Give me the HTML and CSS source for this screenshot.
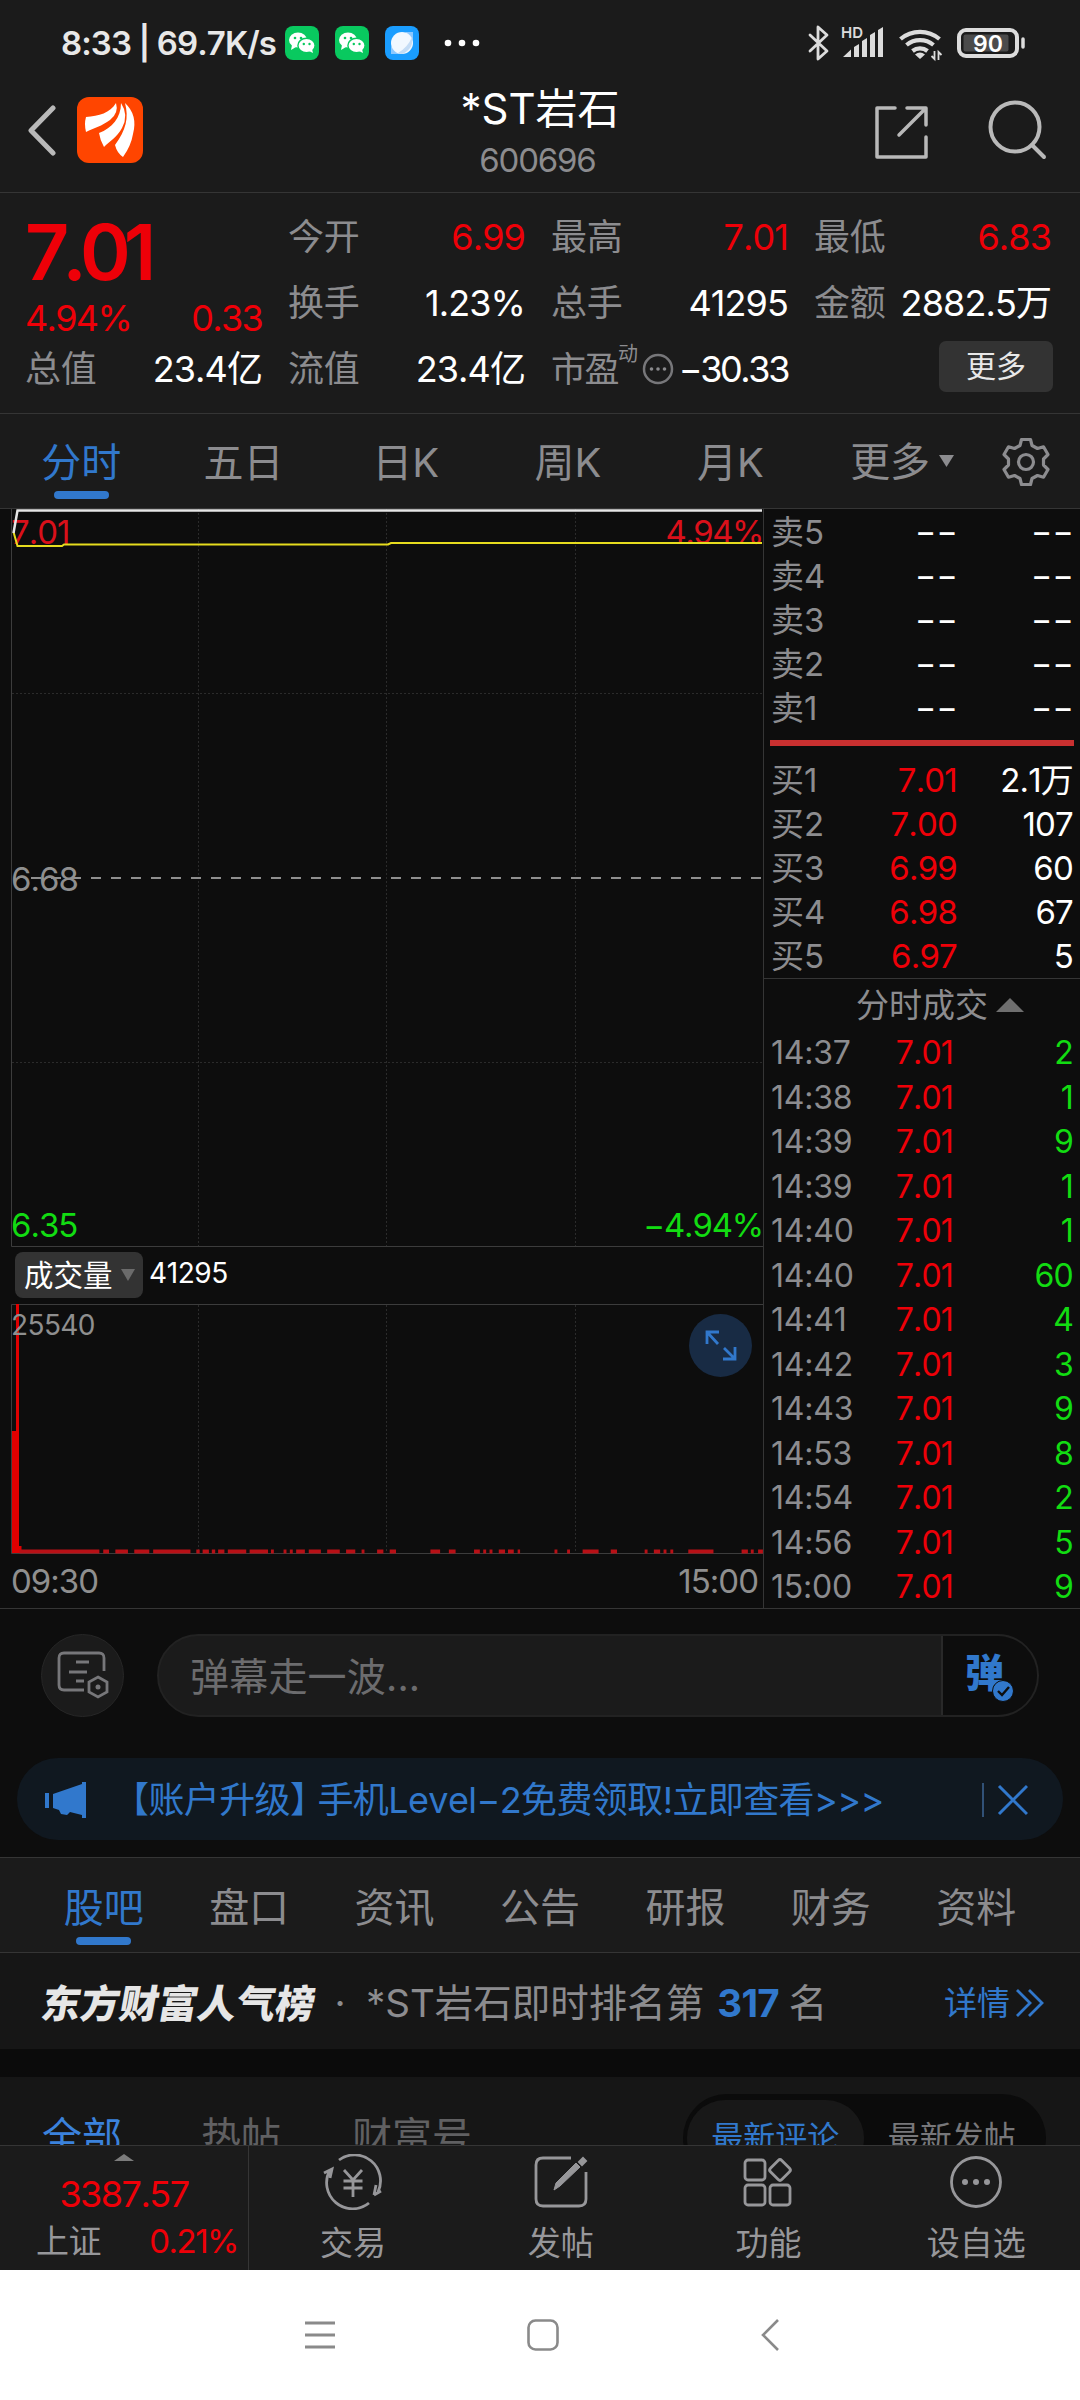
FILE: index.html
```html
<!DOCTYPE html>
<html lang="zh-CN">
<head>
<meta charset="utf-8">
<title>*ST岩石 600696</title>
<link rel="stylesheet" href="styles.css">
</head>
<body>
<header class="top">
  <div class="status">
    <span class="status-text">8:33 | 69.7K/s</span>
    <svg class="app-icons" width="196" height="34" viewBox="0 0 196 34">
      <defs>
        <g id="chat">
          <rect width="34" height="34" rx="8" fill="#09c95f"/>
          <ellipse cx="13" cy="14" rx="9" ry="7.6" fill="#fff"/><path d="M7 19l-1 5 5-3z" fill="#fff"/>
          <ellipse cx="21.5" cy="19.5" rx="8.6" ry="7.2" fill="#fff" stroke="#09c95f" stroke-width="1.4"/><path d="M24 25l4 2-1-4z" fill="#fff"/>
          <g fill="#09c95f"><circle cx="10" cy="12" r="1.3"/><circle cx="16" cy="12" r="1.3"/><circle cx="18.8" cy="18" r="1.2"/><circle cx="24.5" cy="18" r="1.2"/></g>
        </g>
      </defs>
      <use href="#chat"/><use href="#chat" x="50"/>
      <rect x="100" width="34" height="34" rx="8" fill="#1a9dff"/><path d="M120 6h8v8zM106 20v8h9z" fill="#8cc8ff"/><circle cx="117" cy="17" r="11" fill="#f1f8ff"/><path d="M127 11q2 12-10 17l-4-1q10-6 14-16z" fill="#c4dcf5"/>
      <g fill="#fff"><circle cx="163" cy="17" r="3.3"/><circle cx="177" cy="17" r="3.3"/><circle cx="191" cy="17" r="3.3"/></g>
    </svg>
    <svg class="sys-icons" width="220" height="36" viewBox="808 24 220 36" fill="none" stroke="#dcdcdc">
      <path d="M810 34l17 16-9 8V26l9 8-17 16" stroke-width="2.8" stroke-linejoin="round" stroke-linecap="round"/>
      <g fill="#dcdcdc" stroke="none"><path d="M843 56l8-7.500v7.500zM854 46l5-3v13h-5zM862 40l5-3v19h-5zM870 34l5-3v25h-5zM878 29l5-3v30h-5z"/><text class="hd" x="841" y="37">HD</text></g>
      <g stroke-width="4.200"><path d="M900.500 38a30 30 0 0 1 39 0M906.500 44a21 21 0 0 1 27 0M912.500 50a12 12 0 0 1 15 0"/></g>
      <path d="M915 53.500q5-4 10 0l-5 4.500z" fill="#dcdcdc" stroke="none"/>
      <path d="M934.500 50v8l-3-3M938.500 59v-8l3 3" stroke-width="1.800"/>
      <rect x="959" y="29" width="58" height="26" rx="7" stroke-width="4"/>
      <rect x="963.500" y="33.500" width="45" height="17" rx="2" fill="#4b4b4b" stroke="none"/>
      <path d="M1023 38v8" stroke-width="3.500" stroke-linecap="round"/>
      <text class="battery" x="988" y="50.500" text-anchor="middle" fill="#fff" stroke="none">90</text>
    </svg>
  </div>
  <div class="titlebar">
    <svg class="back" width="30" height="52" viewBox="0 0 30 52"><path d="M26 4L4 26.500 26 49" fill="none" stroke="#b9b9b9" stroke-width="5" stroke-linecap="round" stroke-linejoin="round"/></svg>
    <svg class="logo" width="66" height="66" viewBox="0 0 66 66"><rect width="66" height="66" rx="12" fill="#ff4500"/><g fill="#fff"><path d="M9 20C22 19 33 16 39 6Q42 16 33 23C25 29 17 31 9 35Q7 27 9 20z"/><path d="M22 36C35 31 44 21 44 6Q52 18 45 31C40 40 33 44 27 50Q23 43 22 36z"/><path d="M38 48C49 33 52 21 48 6Q61 18 56 37Q54 49 46 60Q40 56 38 48z"/></g></svg>
    <div class="title"><h1>*ST岩石</h1><p>600696</p></div>
    <svg class="share" width="56" height="56" viewBox="0 0 56 56" fill="none" stroke="#b9b9b9" stroke-width="3.500" stroke-linecap="round" stroke-linejoin="round"><path d="M21 4H3v49h49V33M33 4h19v17M51 5L25 31"/></svg>
    <svg class="search" width="60" height="60" viewBox="0 0 60 60" fill="none" stroke="#b9b9b9" stroke-width="4" stroke-linecap="round"><circle cx="27" cy="27" r="24.500"/><path d="M44 45l12 12"/></svg>
  </div>
</header>

<section class="quote">
  <div class="qcol first">
    <strong class="last up">7.01</strong>
    <div class="chg up"><span>4.94%</span><span>0.33</span></div>
    <div class="q"><label>总值</label><b>23.4亿</b></div>
  </div>
  <div class="qcol">
    <div class="q"><label>今开</label><b class="up">6.99</b></div>
    <div class="q"><label>换手</label><b>1.23%</b></div>
    <div class="q"><label>流值</label><b>23.4亿</b></div>
  </div>
  <div class="qcol">
    <div class="q"><label>最高</label><b class="up">7.01</b></div>
    <div class="q"><label>总手</label><b>41295</b></div>
    <div class="q pe"><label>市盈<sup>动</sup></label><svg width="32" height="32" viewBox="0 0 32 32"><circle cx="16" cy="16" r="14" fill="none" stroke="#77777a" stroke-width="2.500"/><g fill="#8a8a8d"><circle cx="9.500" cy="16" r="1.800"/><circle cx="16" cy="16" r="1.800"/><circle cx="22.500" cy="16" r="1.800"/></g></svg><b>−30.33</b></div>
  </div>
  <div class="qcol">
    <div class="q"><label>最低</label><b class="up">6.83</b></div>
    <div class="q"><label>金额</label><b>2882.5万</b></div>
    <div class="q end"><button class="more">更多</button></div>
  </div>
</section>

<nav class="periods">
  <a class="on">分时</a><a>五日</a><a>日K</a><a>周K</a><a>月K</a><a class="drop">更多<svg width="16" height="12" viewBox="0 0 16 12"><path d="M0 0h15L7.500 12z" fill="#8c8c8f"/></svg></a>
  <svg class="gear" width="50" height="50" viewBox="-25 -25 50 50" fill="none" stroke="#8c8c8f" stroke-width="3.200" stroke-linejoin="round"><path d="M-4.500-22.500h9l1.500 6 5.500 3 6-1.700 4.500 7.700-4.500 4.500v6l4.500 4.500-4.500 7.700-6-1.700-5.500 3-1.500 6h-9l-1.500-6-5.500-3-6 1.700-4.500-7.700 4.500-4.500v-6l-4.500-4.500 4.500-7.700 6 1.700 5.500-3z"/><circle r="7.500"/></svg>
</nav>

<main class="market">
  <div class="charts">
    <div class="price-chart">
      <svg width="764" height="738" viewBox="0 509 764 738" fill="none">
        <g stroke="#2b2b2b" stroke-dasharray="2 2"><path d="M198.500 509v738M386.500 509v738M575.500 509v738M12 693.500h751M12 1062.500h751"/></g>
        <path d="M11.500 509V1246.500H763" stroke="#3c3c3c"/>
        <path d="M31 878H763" stroke="#8f8f8f" stroke-width="2" stroke-dasharray="10 10"/>
      </svg>
      <span class="tag tl up">7.01</span><span class="tag tr up">4.94%</span><span class="tag mid">6.68</span><span class="tag bl down">6.35</span><span class="tag br down">−4.94%</span>
      <svg class="lines" width="764" height="60" viewBox="0 509 764 60" fill="none"><path d="M13.500 532L17.500 546H62l2-1.500H388l3-1.500H762" stroke="#e6dc1e" stroke-width="2"/><path d="M13.500 533l4-22.500H762" stroke="#e6e6e6" stroke-width="2.500"/></svg>
    </div>
    <div class="vol-head"><span class="pill">成交量<svg width="14" height="12" viewBox="0 0 14 12"><path d="M0 0h14L7 12z" fill="#6b6b6b"/></svg></span><b>41295</b></div>
    <div class="vol-chart">
      <svg width="764" height="250" viewBox="0 1304 764 250" fill="none">
        <path d="M198.500 1305v248M386.500 1305v248M575.500 1305v248" stroke="#2b2b2b" stroke-dasharray="2 2"/>
        <path d="M763 1304.500H11.500V1553.500H763" stroke="#3c3c3c"/>
        <path d="M12 1431h4V1304h3v242h2.500v7H12z" fill="#e00000"/>
        <path transform="translate(0 1551.500) scale(.4847 1)" stroke="#b81016" stroke-width="4" d="M40 0H205M213 0H225M238 0H264M277 0H308M316 0H393M405 0H412M418 0H431M437 0H444M450 0H463M470 0H508M515 0H553M559 0H565M585 0H591M598 0H604M611 0H629M637 0H662M675 0H701M714 0H733M746 0H752M778 0H791M804 0H817M888 0H908M926 0H940M978 0H990M997 0H1003M1010 0H1016M1029 0H1042M1048 0H1060M1068 0H1073M1144 0H1150M1170 0H1176M1202 0H1235M1260 0H1273M1330 0H1336M1349 0H1362M1369 0H1375M1383 0H1389M1420 0H1472M1530 0H1543M1549 0H1555M1564 0H1574"/>
      </svg>
      <span class="tag max">25540</span>
      <svg class="expand" width="63" height="63" viewBox="0 0 63 63"><circle cx="31.500" cy="31.500" r="31.500" fill="#182b44"/><path d="M18 30V18h12M18 18l11 12M46 33v12H34M46 45L35 34" fill="none" stroke="#3178cc" stroke-width="2.800"/></svg>
    </div>
    <div class="times"><span>09:30</span><span>15:00</span></div>
  </div>

  <aside class="book">
    <div class="asks">
      <p><label>卖5</label><i>--</i><i>--</i></p>
      <p><label>卖4</label><i>--</i><i>--</i></p>
      <p><label>卖3</label><i>--</i><i>--</i></p>
      <p><label>卖2</label><i>--</i><i>--</i></p>
      <p><label>卖1</label><i>--</i><i>--</i></p>
    </div>
    <div class="split"></div>
    <div class="bids">
      <p><label>买1</label><b class="up">7.01</b><b>2.1万</b></p>
      <p><label>买2</label><b class="up">7.00</b><b>107</b></p>
      <p><label>买3</label><b class="up">6.99</b><b>60</b></p>
      <p><label>买4</label><b class="up">6.98</b><b>67</b></p>
      <p><label>买5</label><b class="up">6.97</b><b>5</b></p>
    </div>
    <h2>分时成交<svg width="28" height="14" viewBox="0 0 28 14"><path d="M0 14L14 0l14 14z" fill="#6f6f6f"/></svg></h2>
    <div class="trades">
      <p><label>14:37</label><b class="up">7.01</b><b class="down">2</b></p>
      <p><label>14:38</label><b class="up">7.01</b><b class="down">1</b></p>
      <p><label>14:39</label><b class="up">7.01</b><b class="down">9</b></p>
      <p><label>14:39</label><b class="up">7.01</b><b class="down">1</b></p>
      <p><label>14:40</label><b class="up">7.01</b><b class="down">1</b></p>
      <p><label>14:40</label><b class="up">7.01</b><b class="down">60</b></p>
      <p><label>14:41</label><b class="up">7.01</b><b class="down">4</b></p>
      <p><label>14:42</label><b class="up">7.01</b><b class="down">3</b></p>
      <p><label>14:43</label><b class="up">7.01</b><b class="down">9</b></p>
      <p><label>14:53</label><b class="up">7.01</b><b class="down">8</b></p>
      <p><label>14:54</label><b class="up">7.01</b><b class="down">2</b></p>
      <p><label>14:56</label><b class="up">7.01</b><b class="down">5</b></p>
      <p><label>15:00</label><b class="up">7.01</b><b class="down">9</b></p>
    </div>
  </aside>
</main>

<section class="danmu">
  <div class="round"><svg width="52" height="48" viewBox="0 0 52 48" fill="none" stroke="#77777a" stroke-width="2.800"><path d="M47 20V7q0-5-5-5H7Q2 2 2 7v27q0 5 5 5h20M19 11h13M12 21h18M19 30h8"/><path d="M41 26l9 5v10l-9 5-9-5V31z"/><circle cx="41" cy="36" r="2.500" fill="#77777a" stroke="none"/></svg></div>
  <div class="field"><span>弹幕走一波...</span><div class="toggle"><em>弹</em><svg width="22" height="22" viewBox="0 0 22 22"><circle cx="11" cy="11" r="10.500" fill="#3178cc" stroke="#0d0d0d"/><path d="M6 11l4 4 7-8" fill="none" stroke="#0d0d0d" stroke-width="2.400"/></svg></div></div>
</section>

<section class="notice">
  <svg width="42" height="38" viewBox="0 0 42 38" fill="#3178cc"><path d="M0 12h4v15H0zM8 13l29-10V1h4v36h-4v-3l-12-3-3 3-6-1-2-4-6-2z"/></svg>
  <p><span>【账户升级】</span>手机Level−2免费领取!立即查看&gt;&gt;&gt;</p>
  <svg class="close" width="46" height="34" viewBox="0 0 46 34" fill="none" stroke="#3178cc"><path d="M1 0v34" stroke-width="1.500" stroke="#3d6595"/><path d="M17 3l28 28M45 3L17 31" stroke-width="3"/></svg>
</section>

<nav class="sections"><a class="on">股吧</a><a>盘口</a><a>资讯</a><a>公告</a><a>研报</a><a>财务</a><a>资料</a></nav>

<section class="rank">
  <strong>东方财富人气榜</strong><span class="dot">·</span><span class="msg">*ST岩石即时排名第</span><b>317</b><span class="msg">名</span>
  <a>详情<svg width="28" height="28" viewBox="0 0 28 28" fill="none" stroke="#3178cc" stroke-width="2.800"><path d="M1 1l13 13L1 27M13 1l13 13-13 13"/></svg></a>
</section>

<section class="posts">
  <a class="on">全部</a><a>热帖</a><a>财富号</a>
  <div class="switch"><span class="sel">最新评论</span><span>最新发帖</span></div>
</section>

<footer class="dock">
  <div class="index up">
    <svg width="20" height="7" viewBox="0 0 20 7"><path d="M0 7L10 0l10 7z" fill="#7c7c7c"/></svg>
    <div>3387.57</div>
    <p><label>上证</label><span>0.21%</span></p>
  </div>
  <a><svg width="60" height="56" viewBox="-30 -28 60 56" fill="none" stroke="#97979a" stroke-width="2.800"><path d="M-14-22A26 26 0 0 1 25 10M21 13l7-4M21 13l2-10M16 21A26 26 0 0 1-23-12M-29-9l8-4-2 9"/><path d="M-9-12L0-2l9-10M-9.500-1H9.500M-9.500 6H9.500M0-2V15"/></svg>交易</a>
  <a><svg width="60" height="56" viewBox="-30 -28 60 56" fill="none" stroke="#97979a" stroke-width="2.800"><path d="M10-24H-18q-7 0-7 7V17q0 7 7 7H18q7 0 7-7V-10"/><path d="M-7 8l2-7L15-19l4 4L-1 4z" fill="#97979a" stroke-width="1"/><path d="M18-20l4-4 3 3-4 4z" fill="#97979a" stroke-width="2"/></svg>发帖</a>
  <a><svg width="60" height="56" viewBox="-30 -28 60 56" fill="none" stroke="#97979a" stroke-width="2.800"><rect x="-23" y="-22" width="20" height="20" rx="3"/><rect x="-23" y="3" width="20" height="20" rx="3"/><rect x="2" y="3" width="20" height="20" rx="3"/><rect x="4" y="-20" width="16" height="16" rx="2.500" transform="rotate(45 12 -12)"/></svg>功能</a>
  <a><svg width="60" height="56" viewBox="-30 -28 60 56" fill="none" stroke="#97979a" stroke-width="2.800"><circle r="24.500"/><g fill="#97979a" stroke="none"><circle cx="-11" r="3"/><circle r="3"/><circle cx="11" r="3"/></g></svg>设自选</a>
</footer>

<div class="sysnav">
  <svg width="30" height="32" viewBox="0 0 30 32"><path d="M0 4h30M0 16h30M0 28h30" stroke="#8a8a8a" stroke-width="2.800"/></svg>
  <svg width="32" height="32" viewBox="0 0 32 32"><rect x="1.500" y="1.500" width="29" height="29" rx="7" fill="none" stroke="#8a8a8a" stroke-width="2.600"/></svg>
  <svg width="18" height="32" viewBox="0 0 18 32"><path d="M17 1L2 16l15 15" fill="none" stroke="#8a8a8a" stroke-width="2.600"/></svg>
</div>
</body>
</html>
```
FILE: styles.css
```css
* { box-sizing: border-box; margin: 0; padding: 0; }
html, body { width: 1080px; height: 2400px; overflow: hidden; }
body {
  background: #0d0d0d;
  color: #fff;
  font-family: Inter, "Noto Sans CJK SC", sans-serif;
  font-size: 36px;
  font-kerning: none;
  line-height: 1;
  white-space: nowrap;
}
svg { display: block; flex: none; }
b, i, em, label { font-weight: 400; font-style: normal; }
.up { color: #ee0008; }
.down { color: #12dc12; }

.top { height: 193px; background: #1b1b1b; border-bottom: 1px solid #353535; }
.status { height: 84px; display: flex; align-items: center; padding: 2px 52px 0 61px; }
.status-text { width: 224px; font-size: 33px; font-weight: 600; color: #e8e8e8; letter-spacing: -.9px; }
.sys-icons { margin-left: auto; overflow: visible; }
.hd { font: 600 15px Inter, sans-serif; }
.battery { font: 600 23px Inter, sans-serif; }
.titlebar { height: 92px; display: flex; align-items: center; padding: 0 32px 0 27px; }
.logo { margin-left: 20px; }
.title { flex: 1; text-align: center; padding-left: 155px; padding-top: 8px; }
.title h1 { font-size: 42px; font-weight: 400; line-height: 52px; padding-left: 5px; }
.title p { font-size: 33px; line-height: 50px; color: #8c8c8f; letter-spacing: -1.200px; }
.title + .share { margin: 4px 58px 0 97px; }

.quote { height: 221px; background: #1b1b1b; border-bottom: 1px solid #353535; padding: 11px 27px 0 25px; display: grid; grid-template-columns: repeat(4, 237px); column-gap: 26px; align-content: start; }
.q { height: 66px; display: flex; align-items: center; justify-content: space-between; letter-spacing: -.9px; }
.q label { color: #8c8c8f; letter-spacing: -.2px; }
.last { display: block; height: 97px; line-height: 97px; font-size: 77px; font-weight: 600; letter-spacing: -7px; }
.chg { height: 35px; line-height: 35px; display: flex; justify-content: space-between; letter-spacing: -1.700px; }
.pe label { display: flex; font-size: 35px; letter-spacing: -1.500px; }
.pe b { letter-spacing: -2.400px; }
.pe sup { font-size: 20px; margin-top: -8px; line-height: 20px; letter-spacing: 0; }
.q.end { justify-content: flex-end; margin-right: -2px; }
.more { width: 114px; height: 51px; margin-top: -5px; border: 0; border-radius: 7px; background: #333; color: #e8e8e8; font: 30px/51px Inter, "Noto Sans CJK SC", sans-serif; }

.periods { height: 95px; background: #1b1b1b; border-bottom: 1px solid #353535; display: flex; color: #8c8c8f; font-size: 40px; padding-right: 29px; }
.periods a { width: 162.300px; line-height: 97px; text-align: center; position: relative; }
.on { color: #3178cc; }
.periods .on::after, .sections .on::after { content: ""; position: absolute; left: 50%; bottom: 9px; width: 55px; height: 8px; margin-left: -27.500px; border-radius: 4px; background: #3178cc; }
.periods .drop { display: flex; align-items: center; justify-content: center; gap: 9px; padding-left: 20px; }
.gear { margin: 23px 0 0 auto; }

.market { display: flex; height: 1100px; border-bottom: 1px solid #353535; }
.charts { width: 764px; border-right: 1px solid #353535; }
.price-chart, .vol-chart { position: relative; height: 738px; }
.lines { position: absolute; left: 0; top: 0; }
.tag { position: absolute; font-size: 33px; line-height: 34px; color: #8f8f8f; letter-spacing: -1px; }
.tag.up { color: #d9101a; }
.tag.down { color: #12dc12; }
.tl { left: 11px; top: 6px; }
.tr { right: 0; top: 6px; letter-spacing: -1.500px; }
.mid { left: 11px; top: 353px; }
.bl { left: 11px; bottom: 5px; }
.br { right: 0; bottom: 5px; letter-spacing: -1.200px; }
.vol-head { height: 57px; padding: 5px 0 0 15px; display: flex; gap: 6px; font-size: 28px; }
.vol-head b { line-height: 43px; letter-spacing: -.4px; }
.pill { width: 128px; height: 46px; line-height: 46px; padding-left: 9px; background: #333; border-radius: 8px; display: flex; align-items: center; gap: 8px; font-size: 29.500px; }
.vol-chart { height: 250px; }
.tag.max { left: 11px; top: 4px; font-size: 28px; letter-spacing: -.6px; }
.expand { position: absolute; left: 689px; top: 10px; }
.times { display: flex; justify-content: space-between; padding: 0 5px 0 11px; font-size: 33px; line-height: 54px; color: #8f8f8f; letter-spacing: -1px; }

.book { flex: 1; font-size: 33px; }
.book p { display: grid; grid-template-columns: 100px 86px 1fr; padding: 0 7px; height: 44px; line-height: 44px; text-align: right; letter-spacing: -.8px; }
.book label { text-align: left; color: #8c8c8f; letter-spacing: 0; }
.book i { transform: translateX(1px) scaleX(1.4); transform-origin: right center; letter-spacing: .2px; }
.asks { padding-top: 1px; }
.split { height: 6px; margin: 10px 6px 0; background: #c93030; }
.bids { padding-top: 12px; }
.book h2 { border-top: 1px solid #353535; font-size: 33px; font-weight: 400; color: #8c8c8f; height: 53px; line-height: 53px; display: flex; align-items: center; padding-left: 92px; gap: 8px; }
.trades .up { padding-right: 4px; }
.trades p { height: 44.540px; line-height: 44.540px; font-size: 32px; }
.trades label { letter-spacing: -.2px; }

.danmu { height: 132px; padding: 0 41px; display: flex; align-items: center; justify-content: space-between; }
.round { width: 83px; height: 83px; border-radius: 50%; background: #1b1b1b; border: 1px solid #262626; display: flex; align-items: center; justify-content: center; }
.field { width: 882px; height: 83px; border-radius: 42px; border: 2px solid #222; background: #1b1b1b; display: flex; overflow: hidden; }
.field span { width: 782px; padding-left: 31px; font-size: 39px; line-height: 81px; color: #6c6c6e; letter-spacing: .2px; }
.toggle { flex: 1; background: #0d0d0d; border-left: 2px solid #292929; display: flex; align-items: center; padding-left: 22px; }
.toggle em { font-size: 39px; font-weight: 900; color: #3178cc; margin-top: -5px; }
.toggle svg { margin: 32px 0 0 -12px; }

.notice { margin: 17px 17px; height: 82px; border-radius: 41px; background: #101820; display: flex; align-items: center; padding: 2px 35px 0 28px; color: #3178cc; font-size: 36px; }
.notice p { margin-left: 26px; letter-spacing: -.6px; }
.notice p span { margin-right: -8px; }
.close { margin-left: auto; }

.sections { height: 96px; background: #1b1b1b; border: 1px solid #353535; border-width: 1px 0; display: flex; padding: 0 31px; font-size: 40px; color: #8c8c8f; }
.sections a { flex: 1; text-align: center; line-height: 99px; position: relative; }
.sections .on::after { bottom: 7px; }
.rank { height: 96px; background: #161616; display: flex; align-items: center; padding: 4px 36px 0 42px; font-size: 38.500px; color: #8c8c8f; }
.rank strong { width: 272px; font-weight: 900; font-size: 39px; color: #e6e6e6; transform: skewX(-10deg); }
.dot { width: 52px; text-align: center; }
.rank b { margin: 0 10px 0 13px; color: #3178cc; font-weight: 700; letter-spacing: -.8px; }
.rank a { margin-left: auto; display: flex; align-items: center; gap: 6px; font-size: 33px; color: #3178cc; }
.posts { height: 96px; border-top: 28px solid #0b0b0b; background: #161616; display: flex; overflow: hidden; padding-left: 42px; font-size: 40px; line-height: 119px; color: #606062; }
.posts a { margin-right: 79px; }
.posts a + a { margin-right: 71px; }
.posts .on { color: #3b82dc; }
.posts a:nth-child(3) { margin-right: 0; }
.switch { margin: 17px 34px 0 auto; width: 363px; height: 88px; border-radius: 44px; background: #0b0b0b; padding: 6px 6px 6px 4px; display: flex; font-size: 32px; line-height: 75px; text-align: center; color: #77777a; }
.switch span { flex: 1; }
.switch .sel { background: #181818; border-radius: 38px; color: #3178cc; }

.dock { height: 125px; background: #1b1b1b; border-top: 1px solid #353535; display: grid; grid-template-columns: 249px repeat(4, 207.750px); grid-template-rows: 124px; overflow: hidden; color: #97979a; font-size: 33px; }
.dock > a { display: flex; flex-direction: column; align-items: center; padding-top: 8px; line-height: 66px; }
.index { border-right: 1px solid #353535; letter-spacing: -1.500px; }
.index svg { margin: 8px 0 0 114px; }
.index div { font-size: 36px; line-height: 66px; text-align: center; }
.index p { display: flex; justify-content: space-between; padding: 0 10px 0 36px; line-height: 28px; }
.index label { color: #97979a; letter-spacing: -.5px; }
.sysnav { height: 130px; background: #fff; display: grid; grid-template-columns: 305px 222px 234px 1fr; align-items: center; }
.sysnav svg:first-child { grid-column: 2; }
```
